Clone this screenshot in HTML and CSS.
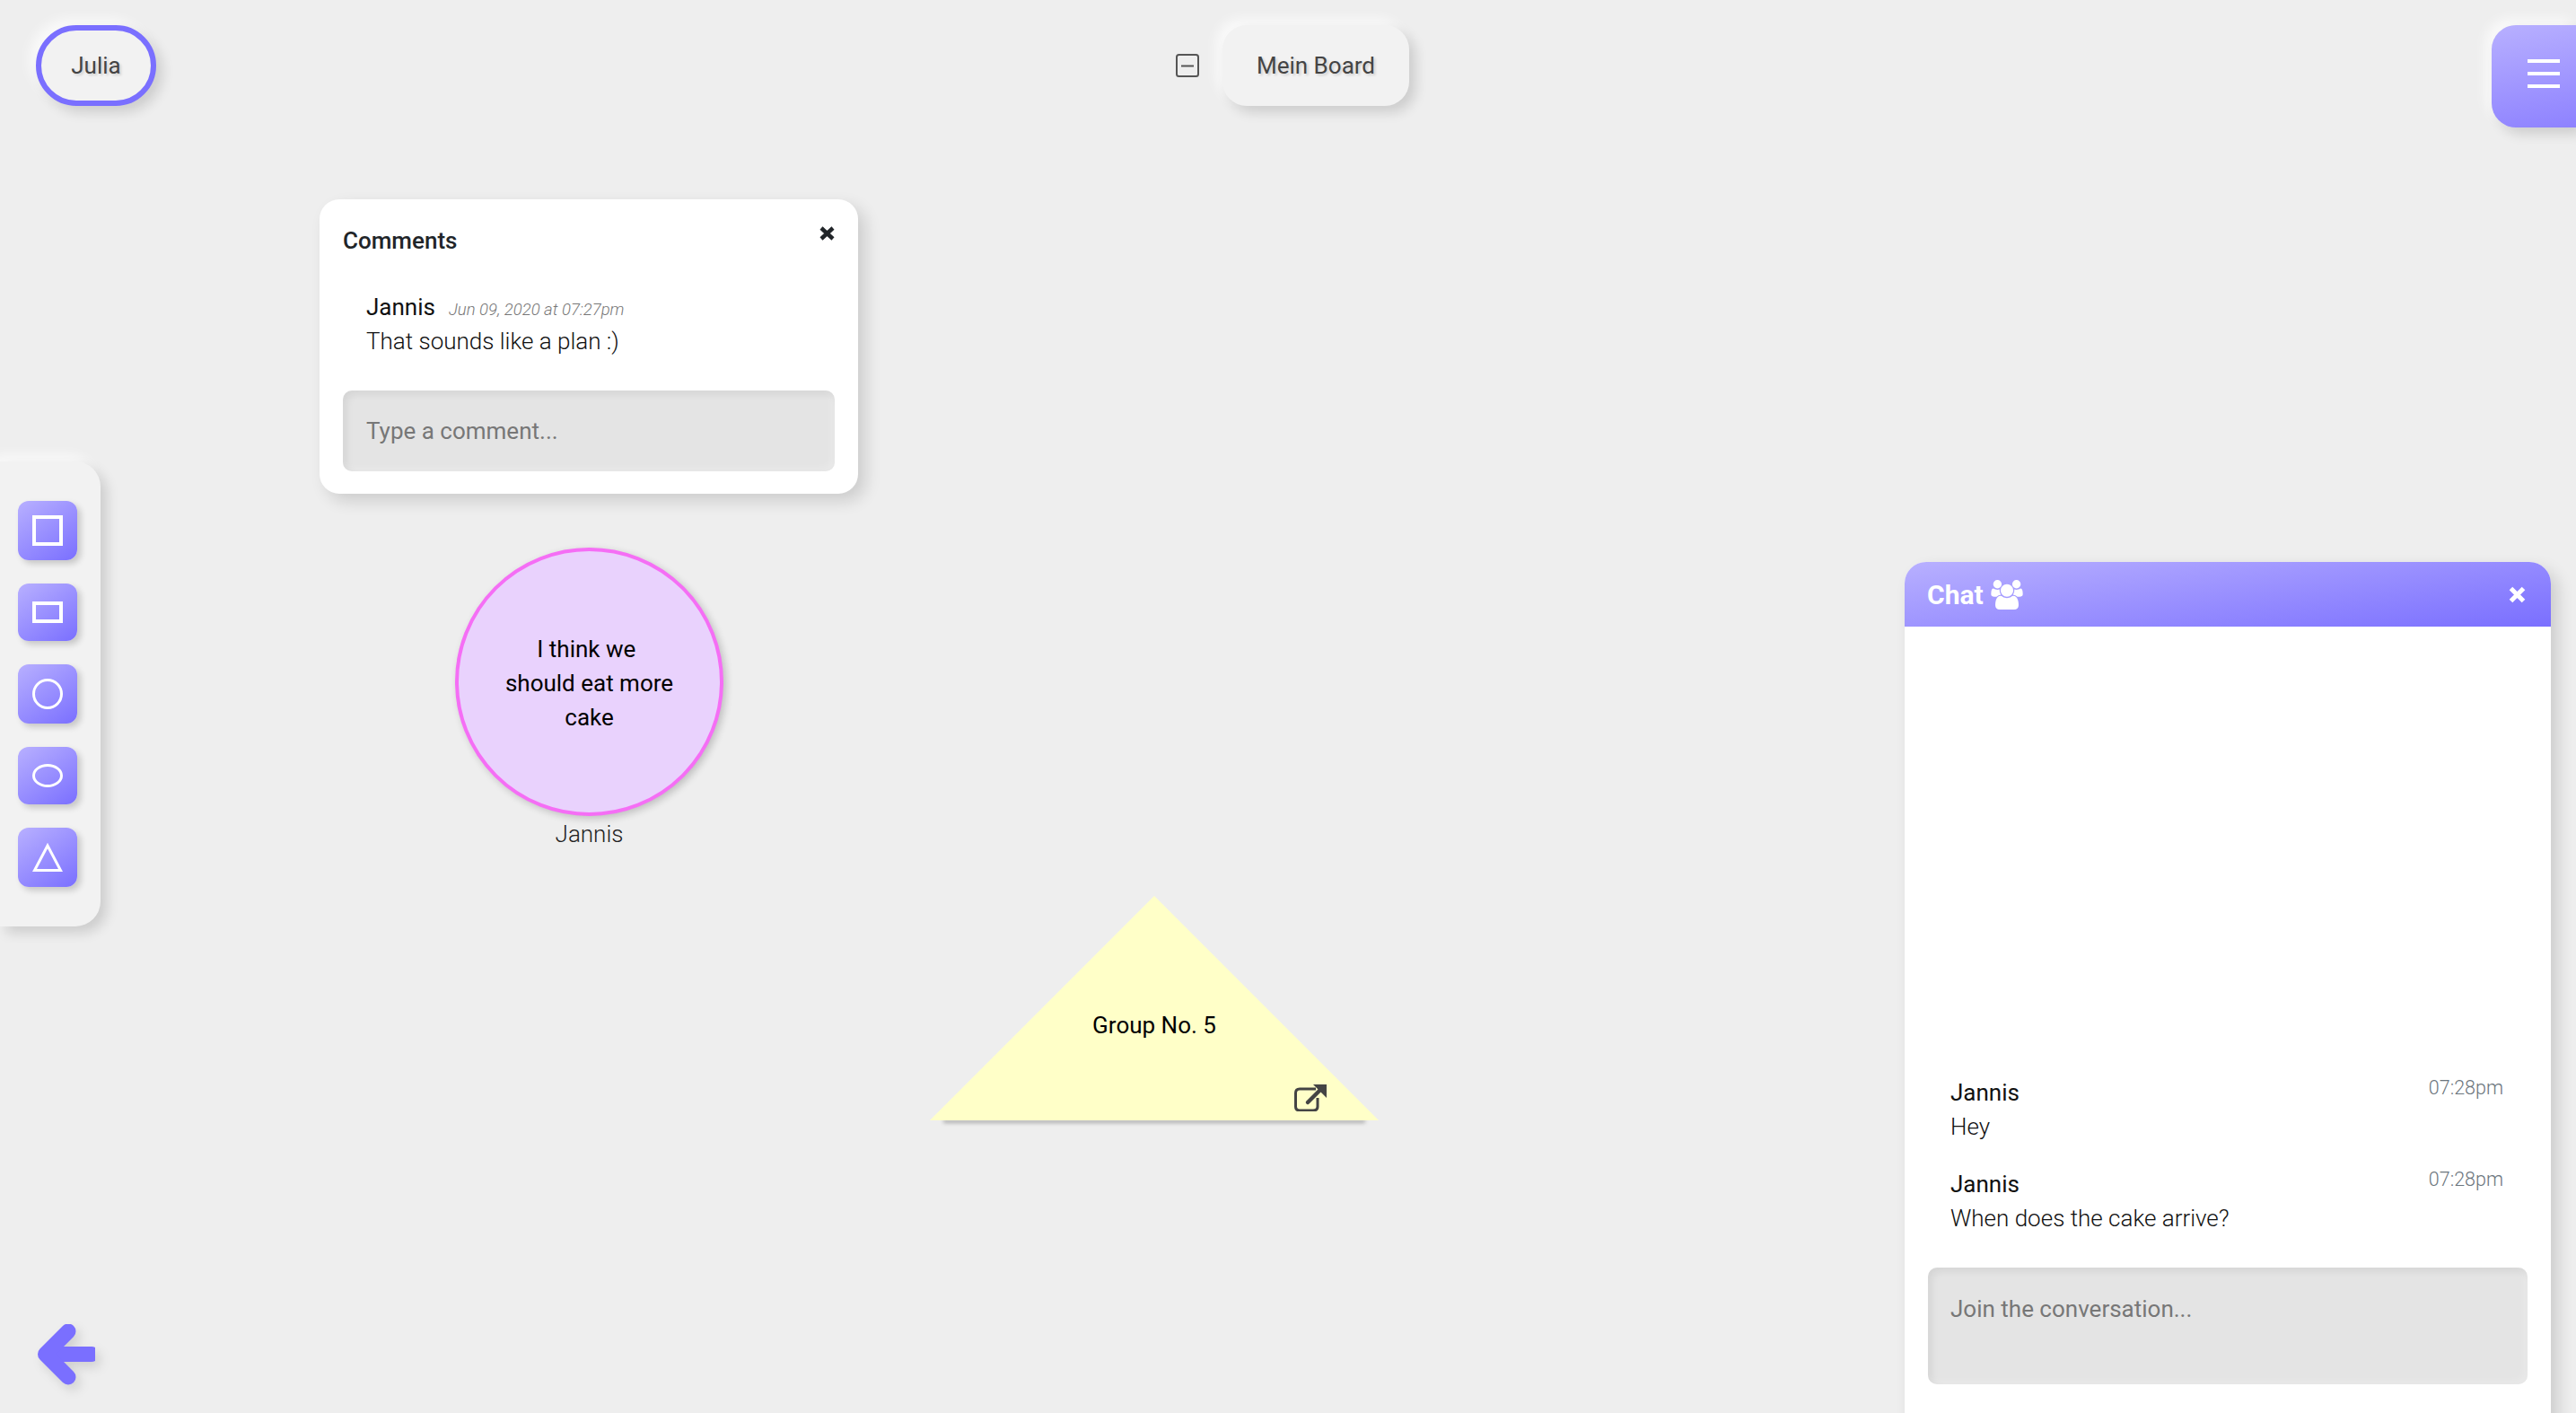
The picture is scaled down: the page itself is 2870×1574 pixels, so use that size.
FILE: index.html
```html
<!DOCTYPE html>
<html lang="en">
<head>
  <meta charset="UTF-8" />
  <title>Mein Board</title>
  <meta name="viewport" content="width=device-width, initial-scale=1.0" />
  <link rel="stylesheet" href="styles.css">
</head>
<body>
  <div class="topbar">
    <div class="user-chip">Julia</div>
    <div class="board-group">
      <svg class="minimize" width="26" height="26" viewBox="0 0 26 26">
        <rect x="1" y="1" width="24" height="24" rx="2.5" fill="none" stroke="#555" stroke-width="2"/>
        <path d="M6 13.500H20" stroke="#555" stroke-width="2"/>
      </svg>
      <div class="board-name">Mein Board</div>
    </div>
    <div class="menu-toggle">
      <span></span>
      <span></span>
      <span></span>
    </div>
  </div>

  <div class="toolbar">
    <div class="tool">
      <svg width="34" height="34" viewBox="0 0 34 34"><rect x="2" y="2" width="30" height="30" fill="none" stroke="#fff" stroke-width="4"/></svg>
    </div>
    <div class="tool tool-short">
      <svg width="34" height="24" viewBox="0 0 34 24"><rect x="2" y="2" width="30" height="20" fill="none" stroke="#fff" stroke-width="4"/></svg>
    </div>
    <div class="tool">
      <svg width="34" height="34" viewBox="0 0 34 34"><circle cx="17" cy="17" r="15.500" fill="none" stroke="#fff" stroke-width="3"/></svg>
    </div>
    <div class="tool tool-short">
      <svg width="34" height="26" viewBox="0 0 34 26"><ellipse cx="17" cy="13" rx="15.500" ry="11.500" fill="none" stroke="#fff" stroke-width="3"/></svg>
    </div>
    <div class="tool">
      <svg width="34" height="34" viewBox="0 0 34 34"><path d="M17 4L31.500 31.500H2.500Z" fill="none" stroke="#fff" stroke-width="3"/></svg>
    </div>
  </div>

  <div class="comments">
    <div class="comments-head">
      <h3>Comments</h3>
      <svg class="close" width="17" height="16" viewBox="0 0 17 16"><path d="M2 2L15 14M15 2L2 14" stroke="#212529" stroke-width="4.500"/></svg>
    </div>
    <div class="comment">
      <div><span class="comment-author">Jannis</span><span class="comment-date">Jun 09, 2020 at 07:27pm</span></div>
      <p>That sounds like a plan :)</p>
    </div>
    <input class="field comment-input" type="text" placeholder="Type a comment..." />
  </div>

  <div class="note-circle">
    <div class="circle-body"><span>I think we&nbsp; should eat more cake</span></div>
    <div class="note-author">Jannis</div>
  </div>

  <div class="note-triangle">
    <div class="triangle-body">
      <span>Group No. 5</span>
      <svg class="open-link" width="36" height="30" viewBox="0 0 36 30">
        <path d="M24 5H6Q1.500 5 1.500 9.500V24.500Q1.500 29 6 29H21Q26 29 26 24.500V15" fill="none" stroke="#444" stroke-width="3"/>
        <path d="M15 20L29 6" stroke="#444" stroke-width="4.500" stroke-linecap="round"/>
        <path d="M21 0H36V15Z" fill="#444"/>
      </svg>
    </div>
  </div>

  <div class="chat">
    <div class="chat-head">
      <span class="chat-title">Chat</span>
      <svg class="chat-users" width="36" height="33" viewBox="0 0 1920 1792" fill="#fff"><path d="M593 896q-162 5-265 128h-134q-82 0-138-40.500t-56-118.500q0-353 124-353 6 0 43.500 21t97.500 42.500 119 21.500q67 0 133-23-5 37-5 66 0 139 81 256zm1071 637q0 120-73 189.500t-194 69.500h-874q-121 0-194-69.500t-73-189.500q0-53 3.500-103.500t14-109 26.500-108.500 43-97.500 62-81 85.500-53.500 111.500-20q10 0 43 21.500t73 48 107 48 135 21.500 135-21.500 107-48 73-48 43-21.500q61 0 111.500 20t85.500 53.500 62 81 43 97.500 26.500 108.500 14 109 3.500 103.500zm-1024-1277q0 106-75 181t-181 75-181-75-75-181 75-181 181-75 181 75 75 181zm704 384q0 159-112.500 271.500t-271.500 112.500-271.500-112.500-112.500-271.500 112.500-271.500 271.500-112.500 271.500 112.500 112.500 271.500zm576 225q0 78-56 118.500t-138 40.500h-134q-103-123-265-128 81-117 81-256 0-29-5-66 66 23 133 23 59 0 119-21.500t97.500-42.500 43.500-21q124 0 124 353zm-128-609q0 106-75 181t-181 75-181-75-75-181 75-181 181-75 181 75 75 181z"/></svg>
      <svg class="chat-close" width="19" height="19" viewBox="0 0 19 19"><path d="M2.500 2.500L16.500 16.500M16.500 2.500L2.500 16.500" stroke="#fff" stroke-width="5"/></svg>
    </div>
    <div class="messages">
      <div class="message">
        <div class="message-top"><span class="message-author">Jannis</span><span class="message-time">07:28pm</span></div>
        <p>Hey</p>
      </div>
      <div class="message">
        <div class="message-top"><span class="message-author">Jannis</span><span class="message-time">07:28pm</span></div>
        <p>When does the cake arrive?</p>
      </div>
    </div>
    <textarea class="field chat-input" placeholder="Join the conversation..."></textarea>
  </div>

  <svg class="back" width="64" height="68" viewBox="0 0 64 68">
    <path d="M60 33.500H20" stroke="#7a6fff" stroke-width="17" stroke-linecap="round"/>
    <path d="M34 8L8.500 33.500L34 59" fill="none" stroke="#7a6fff" stroke-width="17" stroke-linecap="round" stroke-linejoin="round"/>
  </svg>
</body>
</html>
```

FILE: styles.css
```css
:root {
  --purple: #7a6fff;
  --purple-light: #b8b0ff;
  --bg: #eeeeee;
  --raised: #f2f2f2;
  --raised-shadow: 7px 7px 14px rgba(0, 0, 0, 0.14), -7px -7px 14px rgba(255, 255, 255, 0.7);
}
* { margin: 0; padding: 0; box-sizing: border-box; }
html, body {
  height: 100%;
  overflow: hidden;
}
body {
  font-family: Roboto, sans-serif;
  background: var(--bg);
  color: #212529;
  font-size: 26px;
  position: relative;
}

.topbar {
  display: grid;
  grid-template-columns: 1fr auto 1fr;
  align-items: start;
  padding: 28px 0 0 40px;
}
.user-chip {
  justify-self: start;
  width: 134px;
  height: 90px;
  display: flex;
  align-items: center;
  justify-content: center;
  color: #444;
  background: var(--raised);
  border: 6px solid var(--purple);
  border-radius: 45px;
  box-shadow: var(--raised-shadow);
  text-shadow: 2px 2px 3px rgba(0, 0, 0, 0.15);
}
.board-group {
  display: flex;
  align-items: center;
  gap: 26px;
  margin-right: 30px;
}
.board-name {
  width: 208px;
  height: 90px;
  display: flex;
  align-items: center;
  justify-content: center;
  color: #444;
  background: var(--raised);
  border-radius: 27px;
  box-shadow: var(--raised-shadow);
  text-shadow: 2px 2px 3px rgba(0, 0, 0, 0.15);
}
.menu-toggle {
  justify-self: end;
  width: 94px;
  height: 114px;
  display: flex;
  flex-direction: column;
  gap: 10px;
  padding: 38px 0 0 40px;
  background: linear-gradient(170deg, var(--purple-light), #8e82ff);
  border-radius: 27px 0 0 27px;
  box-shadow: var(--raised-shadow);
}
.menu-toggle span {
  width: 36px;
  height: 4px;
  background: #fff;
}

.toolbar {
  position: absolute;
  left: 0;
  top: 514px;
  width: 112px;
  display: flex;
  flex-direction: column;
  gap: 26px;
  padding: 44px 26px 44px 20px;
  background: var(--raised);
  border-radius: 0 28px 28px 0;
  box-shadow: var(--raised-shadow);
}
.tool {
  height: 66px;
  display: flex;
  align-items: center;
  justify-content: center;
  background: linear-gradient(145deg, var(--purple-light), var(--purple));
  border-radius: 12px;
  box-shadow: 4px 4px 7px rgba(0, 0, 0, 0.18);
}
.tool-short { height: 64px; }

.comments {
  position: absolute;
  left: 356px;
  top: 222px;
  width: 600px;
  height: 328px;
  padding: 26px;
  background: #fff;
  border-radius: 22px;
  box-shadow: 8px 8px 18px rgba(0, 0, 0, 0.14);
}
.comments-head {
  display: flex;
  justify-content: space-between;
  align-items: flex-start;
}
.comments-head h3 {
  font-size: 26px;
  font-weight: 500;
  line-height: 32px;
  margin-top: 4px;
}
.close { margin-top: 4px; }
.comment {
  margin: 39px 0 0 26px;
  font-weight: 300;
  color: #111;
}
.comment-author {
  font-weight: 400;
  line-height: 38px;
}
.comment-date {
  font-size: 18.500px;
  font-style: italic;
  font-weight: 300;
  color: #777;
  margin-left: 15px;
}
.comment p { line-height: 38px; }

.field {
  display: block;
  border: none;
  outline: none;
  resize: none;
  font-family: Roboto, sans-serif;
  font-size: 26px;
  background: #e4e4e4;
  border-radius: 10px;
  box-shadow: inset 4px 4px 8px rgba(0, 0, 0, 0.07), inset -3px -3px 8px rgba(255, 255, 255, 0.25);
}
.field::placeholder { color: #777; }
.comment-input {
  width: 548px;
  height: 90px;
  margin-top: 36px;
  padding: 0 26px;
}

.note-circle {
  position: absolute;
  left: 507px;
  top: 610px;
  width: 299px;
}
.circle-body {
  height: 299px;
  display: flex;
  align-items: center;
  justify-content: center;
  padding: 2px 51px 0;
  text-align: center;
  line-height: 38px;
  color: #000;
  background: #e9d2fd;
  border: 4px solid #f56ef5;
  border-radius: 50%;
  box-shadow: 3px 3px 8px rgba(0, 0, 0, 0.2);
}
.note-author {
  text-align: center;
  font-weight: 300;
  line-height: 40px;
  color: #222;
}

.note-triangle {
  position: absolute;
  left: 1036px;
  top: 998px;
  width: 500px;
  height: 250px;
}
/* only the base throws a shadow */
.note-triangle::before {
  content: "";
  position: absolute;
  left: 15px;
  right: 15px;
  bottom: 0;
  height: 4px;
  box-shadow: 0 3px 4px rgba(0, 0, 0, 0.28);
}
.triangle-body {
  position: relative;
  height: 100%;
  display: flex;
  justify-content: center;
  padding-top: 129px;
  color: #000;
  background: #ffffc8;
  clip-path: polygon(50% 0, 100% 100%, 0 100%);
}
.open-link {
  position: absolute;
  left: 406px;
  top: 210px;
}

.chat {
  position: absolute;
  left: 2122px;
  top: 626px;
  width: 720px;
  height: 980px;
  background: #fff;
  border-radius: 24px;
  box-shadow: 8px 8px 18px rgba(0, 0, 0, 0.14);
}
.chat-head {
  height: 72px;
  display: flex;
  align-items: center;
  padding: 0 28px 0 25px;
  color: #fff;
  background: linear-gradient(172deg, var(--purple-light), var(--purple));
  border-radius: 24px 24px 0 0;
}
.chat-title {
  font-size: 30px;
  font-weight: 700;
}
.chat-users { margin-left: 8px; }
.chat-close { margin-left: auto; }
.messages {
  height: 678px;
  display: flex;
  flex-direction: column;
  justify-content: flex-end;
  gap: 26px;
  padding: 0 53px 0 51px;
  color: #111;
}
.message { font-weight: 300; }
.message-top {
  display: flex;
  justify-content: space-between;
}
.message-author {
  font-weight: 400;
  line-height: 38px;
}
.message-time {
  font-size: 21.500px;
  line-height: 28px;
  color: #6c757d;
}
.message p { line-height: 38px; }
.chat-input {
  width: 668px;
  height: 130px;
  margin: 36px 0 0 26px;
  padding: 31px 25px;
}

.back {
  position: absolute;
  left: 42px;
  top: 1475px;
  filter: drop-shadow(5px 6px 6px rgba(0, 0, 0, 0.12));
}
```
